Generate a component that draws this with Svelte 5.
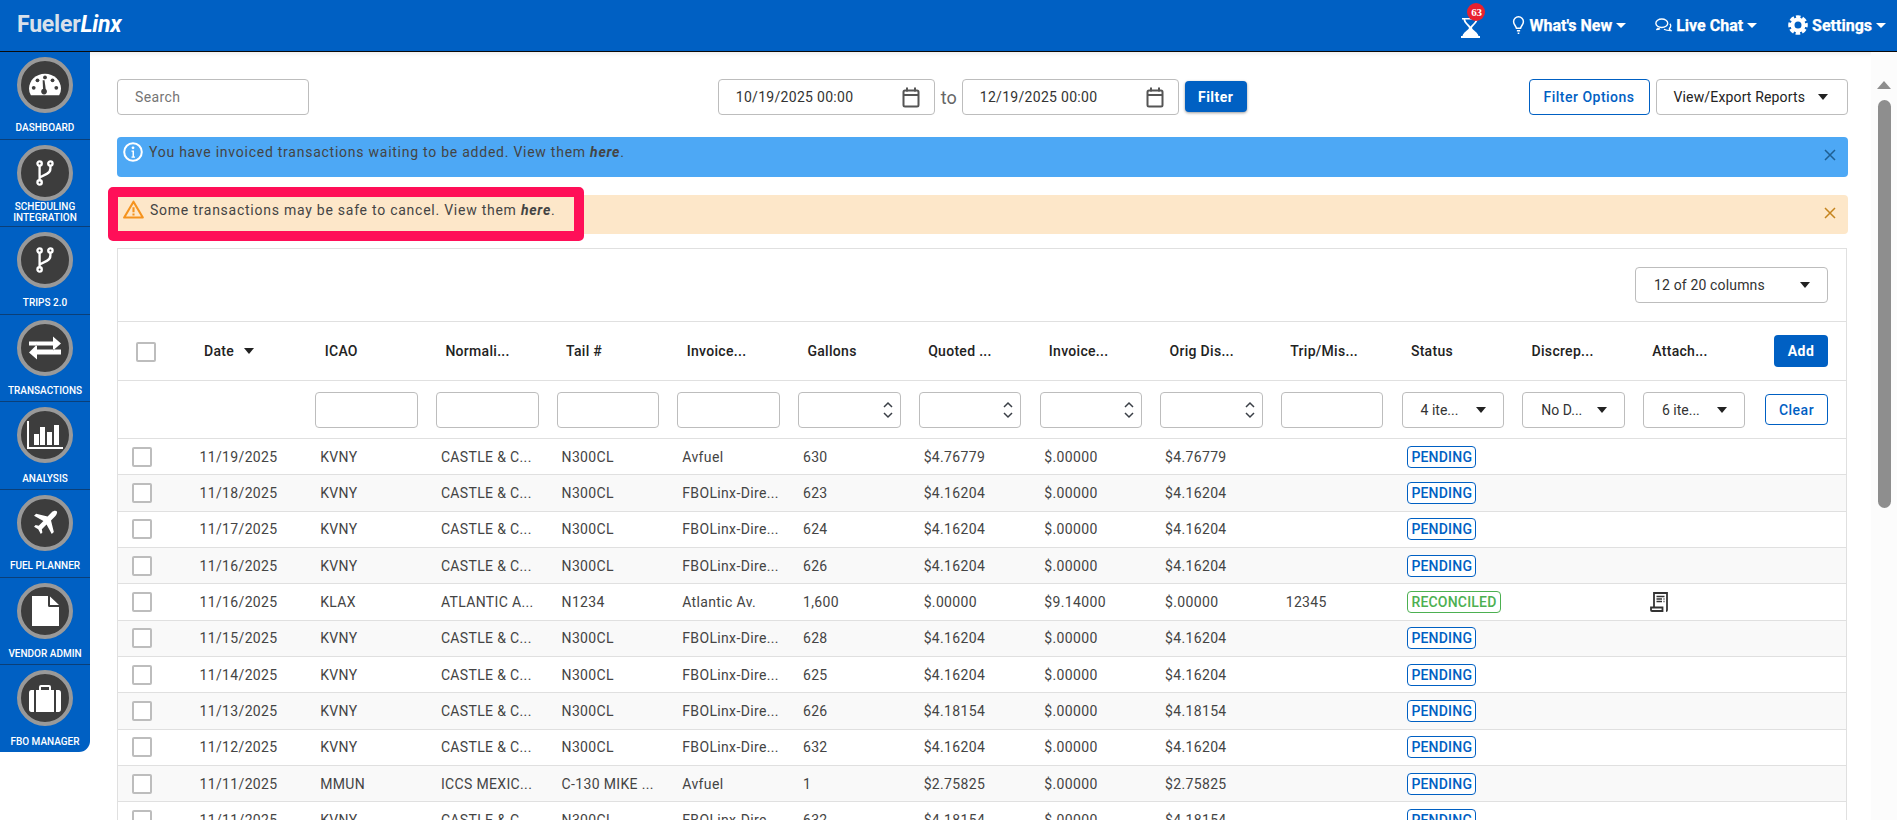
<script>
  const nav = [
    { label: ['DASHBOARD'], icon: 'gauge' },
    { label: ['SCHEDULING', 'INTEGRATION'], icon: 'branch' },
    { label: ['TRIPS 2.0'], icon: 'branch' },
    { label: ['TRANSACTIONS'], icon: 'arrows' },
    { label: ['ANALYSIS'], icon: 'chart' },
    { label: ['FUEL PLANNER'], icon: 'plane' },
    { label: ['VENDOR ADMIN'], icon: 'file' },
    { label: ['FBO MANAGER'], icon: 'case' }
  ];
  const heads = ['Date', 'ICAO', 'Normali...', 'Tail #', 'Invoice...', 'Gallons', 'Quoted ...', 'Invoice...', 'Orig Dis...', 'Trip/Mis...', 'Status', 'Discrep...', 'Attach...'];
  const filters = ['none', 'text', 'text', 'text', 'text', 'num', 'num', 'num', 'num', 'text', 'sel', 'sel', 'sel'];
  const filterText = { 10: '4 ite...', 11: 'No D...', 12: '6 ite...' };
  const C = 'CASTLE & C...', F = 'FBOLinx-Dire...';
  const rows = [
    ['11/19/2025', 'KVNY', C, 'N300CL', 'Avfuel', '630', '$4.76779', '$.00000', '$4.76779', '', 'P', false],
    ['11/18/2025', 'KVNY', C, 'N300CL', F, '623', '$4.16204', '$.00000', '$4.16204', '', 'P', false],
    ['11/17/2025', 'KVNY', C, 'N300CL', F, '624', '$4.16204', '$.00000', '$4.16204', '', 'P', false],
    ['11/16/2025', 'KVNY', C, 'N300CL', F, '626', '$4.16204', '$.00000', '$4.16204', '', 'P', false],
    ['11/16/2025', 'KLAX', 'ATLANTIC A...', 'N1234', 'Atlantic Av.', '1,600', '$.00000', '$9.14000', '$.00000', '12345', 'R', true],
    ['11/15/2025', 'KVNY', C, 'N300CL', F, '628', '$4.16204', '$.00000', '$4.16204', '', 'P', false],
    ['11/14/2025', 'KVNY', C, 'N300CL', F, '625', '$4.16204', '$.00000', '$4.16204', '', 'P', false],
    ['11/13/2025', 'KVNY', C, 'N300CL', F, '626', '$4.18154', '$.00000', '$4.18154', '', 'P', false],
    ['11/12/2025', 'KVNY', C, 'N300CL', F, '632', '$4.16204', '$.00000', '$4.16204', '', 'P', false],
    ['11/11/2025', 'MMUN', 'ICCS MEXIC...', 'C-130 MIKE ...', 'Avfuel', '1', '$2.75825', '$.00000', '$2.75825', '', 'P', false],
    ['11/11/2025', 'KVNY', C, 'N300CL', F, '632', '$4.18154', '$.00000', '$4.18154', '', 'P', false]
  ];
</script>

{#snippet caret()}
  <svg class="caret" viewBox="0 0 10 6" width="10" height="6"><path d="M0 0h10L5 6z" fill="#222" /></svg>
{/snippet}

{#snippet calendar()}
  <svg class="cal" viewBox="0 0 18 21" width="18" height="21" fill="none" stroke="#555" stroke-width="2">
    <rect x="1.500" y="3.500" width="15" height="16" rx="1.500" /><path d="M1.500 8h15M5 .5v4M13 .5v4" />
  </svg>
{/snippet}

{#snippet icon(name)}
  {#if name === 'gauge'}
    <svg viewBox="0 0 34 24" width="32" height="24"><path fill="#fff" fill-rule="evenodd" d="M2 23Q0 20 0 16C0 7 7.500 0 17 0s17 7 17 16q0 4-2 7z" /><g fill="#3d3d3d"><circle cx="5" cy="15" r="2" /><circle cx="9" cy="7" r="2" /><circle cx="17" cy="4" r="2" /><circle cx="25" cy="7" r="2" /><circle cx="29" cy="15" r="2" /><circle cx="16" cy="19" r="3" /><path d="M15 18l-.5-11h2l1.500 11z" /></g></svg>
  {:else if name === 'branch'}
    <svg viewBox="0 0 20 28" width="18" height="26" fill="none" stroke="#fff" stroke-width="2.600"><circle cx="4" cy="3.500" r="2.400" /><circle cx="16" cy="3.500" r="2.400" /><circle cx="4" cy="24.500" r="2.400" /><path d="M4 6v16M16 6v3q0 4-4 6l-8 4" /></svg>
  {:else if name === 'arrows'}
    <svg viewBox="0 0 32 24" width="32" height="24" fill="#fff"><path d="M0 6h24V1l8 7-8 7v-5H0zM32 14H8V9L0 17l8 7v-5h24z" transform="translate(0 -.5)" /></svg>
  {:else if name === 'chart'}
    <svg viewBox="0 0 36 28" width="36" height="28" fill="#fff"><path d="M0 0h2v26h34v2H0z" /><path d="M7 13h5v11H7zM13 6h5v18h-5zM20 11h5v13h-5zM27 4h5v20h-5z" /></svg>
  {:else if name === 'plane'}
    <svg viewBox="0 0 24 24" width="25" height="25" fill="#fff"><path d="M23 1.500c-1-1.200-3.500-.8-5 .7l-4 4L3 3.500 1 5.500l9 5-4.500 4.500-3-.5L1 16l4 2.500L7.500 23l1.500-1.500-.5-3 4.500-4.500 5 9 2-2-2.700-11 4-4c1.500-1.500 2.200-3.800 1.700-4.500z" /></svg>
  {:else if name === 'file'}
    <svg viewBox="0 0 27 30" width="27" height="30" fill="#fff"><path d="M0 0h16v9.500q0 1.500 1.500 1.500H27v19H0zM18 .500L27 9h-9z" /></svg>
  {:else}
    <svg viewBox="0 0 32 27" width="32" height="27" fill="#fff"><path d="M5 5H2.500Q0 5 0 8v16q0 3 2.500 3H5zM27 5h2.500Q32 5 32 8v16q0 3-2.500 3H27zM7 5h3V2q0-2 2-2h8q2 0 2 2v3h3v22H7zM12 2v3h8V2z" fill-rule="evenodd" /></svg>
  {/if}
{/snippet}

<div class="page">
  <header class="top">
    <div class="logo">Fueler<em>Linx</em></div>
    <div class="top-right">
      <div class="hour">
        <svg viewBox="0 0 19 20" width="19" height="20" fill="#fff"><path d="M1 0h17v1.500h-1.500C16 5.500 12 7.500 11 10c1 2.500 5.500 4 6.500 8H19v2H0v-2h1.500c1-4 5.500-5.500 6.500-8C7 7.500 3 5.500 2.500 1.500H1zM4.200 1.500C5 5 8 6.500 9.500 8.500 11 6.500 14 5 14.800 1.500z" fill-rule="evenodd" /></svg>
        <span class="badge">63</span>
      </div>
      <div class="tnav news">
        <svg viewBox="0 0 14 22" width="13" height="18" fill="none" stroke="#fff" stroke-width="1.800"><path d="M4.500 15C4 12 1 10.500 1 7a6 6 0 0 1 12 0c0 3.500-3 5-3.500 8z" /><path d="M5 18h4M6 21h2" /></svg>
        <span>What's New</span><i></i>
      </div>
      <div class="tnav chat">
        <svg viewBox="0 0 20 16" width="17" height="14" fill="none" stroke="#fff" stroke-width="1.600"><ellipse cx="8" cy="6" rx="7" ry="5" /><path d="M4 11.500q-1 1.500-2.500 2 2.500 0 4.500-1.200M10.500 13q3 1.500 8 1.500-1.500-1-1.500-2.500 1.500-1.300 1.500-3 0-1.500-1-2.500" /></svg>
        <span>Live Chat</span><i></i>
      </div>
      <div class="tnav gear">
        <svg viewBox="0 0 20 20" width="20" height="20"><circle cx="10" cy="10" r="5.500" fill="none" stroke="#fff" stroke-width="4" /><circle cx="10" cy="10" r="8.300" fill="none" stroke="#fff" stroke-width="3" stroke-dasharray="4.500 2.020" stroke-dashoffset="2.250" /></svg>
        <span>Settings</span><i></i>
      </div>
    </div>
  </header>

  <div class="body">
    <aside class="side">
      {#each nav as n}
        <div class="nav-item">
          <div class="disc">{@render icon(n.icon)}</div>
          <div class="nav-label" class:two={n.label.length > 1}>{#each n.label as l}<div>{l}</div>{/each}</div>
        </div>
      {/each}
    </aside>

    <main class="main">
      <div class="controls">
        <input class="search" placeholder="Search" />
        <div class="dates">
          <div class="date"><span>10/19/2025 00:00</span>{@render calendar()}</div>
          <span class="to">to</span>
          <div class="date"><span>12/19/2025 00:00</span>{@render calendar()}</div>
          <button class="btn-filter">Filter</button>
        </div>
        <div class="right-btns">
          <button class="btn-outline">Filter Options</button>
          <div class="select-report"><span>View/Export Reports</span>{@render caret()}</div>
        </div>
      </div>

      <div class="alert info">
        <svg viewBox="0 0 20 20" width="20" height="20"><circle cx="10" cy="10" r="8.800" fill="none" stroke="#fff" stroke-width="2" /><circle cx="10" cy="5.800" r="1.400" fill="#fff" /><path d="M8.500 8.500h2.500v6h1v1.200H8.500v-1.200h1V9.700h-1z" fill="#fff" /></svg>
        <span>You have invoiced transactions waiting to be added. View them <b>here</b>.</span>
        <svg class="x" viewBox="0 0 12 12" width="12" height="12"><path d="M1 1l10 10M11 1L1 11" stroke="#1f5f92" stroke-width="1.500" /></svg>
      </div>
      <div class="alert warn">
        <svg viewBox="0 0 22 20" width="21" height="19" fill="none"><path d="M11 1.800L1.200 18.500h19.600z" stroke="#f5931e" stroke-width="2.200" stroke-linejoin="round" /><path d="M11 7.500v5.500M11 14.300v2" stroke="#f5931e" stroke-width="2.200" /></svg>
        <span>Some transactions may be safe to cancel. View them <b>here</b>.</span>
        <svg class="x" viewBox="0 0 12 12" width="12" height="12"><path d="M1 1l10 10M11 1L1 11" stroke="#c5841f" stroke-width="1.500" /></svg>
        <div class="mark"></div>
      </div>

      <section class="card">
        <div class="toolbar">
          <div class="select-cols"><span>12 of 20 columns</span>{@render caret()}</div>
        </div>
        <div class="grid-row head">
          <div class="chk-cell"><span class="chk"></span></div>
          {#each heads as h, i}
            <div class="hcell">{h}{#if i === 0}{@render caret()}{/if}</div>
          {/each}
          <div class="end"><button class="btn-add">Add</button></div>
        </div>
        <div class="grid-row filter">
          <div></div>
          {#each filters as f, i}
            <div class="fcell">
              {#if f === 'text'}
                <span class="finput"></span>
              {:else if f === 'num'}
                <span class="finput num">
                  <svg viewBox="0 0 10 20" width="10" height="20" fill="none" stroke="#3a3f46" stroke-width="1.500"><path d="M1 7l4-4 4 4M1 13l4 4 4-4" /></svg>
                </span>
              {:else if f === 'sel'}
                <span class="finput sel"><span>{filterText[i]}</span>{@render caret()}</span>
              {/if}
            </div>
          {/each}
          <div class="end"><button class="btn-clear">Clear</button></div>
        </div>
        {#each rows as r, ri}
          <div class="grid-row row" class:odd={ri % 2 === 1}>
            <div class="chk-cell body-chk"><span class="chk"></span></div>
            {#each r.slice(0, 10) as c}
              <div class="cell">{c}</div>
            {/each}
            <div class="cell">
              {#if r[10] === 'P'}<span class="tag pending">PENDING</span>{:else}<span class="tag rec">RECONCILED</span>{/if}
            </div>
            <div class="cell"></div>
            <div class="cell">
              {#if r[11]}
                <svg class="doc" viewBox="0 0 18 20" width="18" height="20" fill="none" stroke="#333" stroke-width="1.800"><path d="M4 15.500V1h13v17q0 1-1 1" /><path d="M1 15.500h11.500V19H2q-1 0-1-1z" /><path d="M6.500 4.500h8M6.500 7h5.500M13.500 7h1M6.500 9.500h5.500M13.500 9.500h1" stroke-width="1.300" /></svg>
              {/if}
            </div>
            <div></div>
          </div>
        {/each}
      </section>
    </main>

    <div class="scroll">
      <svg viewBox="0 0 14 8" width="14" height="8"><path d="M7 0l7 8H0z" fill="#8e8e8e" /></svg>
      <div class="thumb"></div>
    </div>
  </div>
</div>

<style>
  :global(body) { margin: 0; background: #fff; overflow: hidden; }
  :global(*) { box-sizing: border-box; }
  .page { height: 820px; display: flex; flex-direction: column; font-family: Roboto, "Liberation Sans", sans-serif; color: #333; overflow: hidden; }

  .top { height: 52px; flex: none; background: #0060c3; border-bottom: 1px solid #0a0a0a; display: flex; align-items: center; justify-content: space-between; padding: 0 11px 1px 17px; color: #fff; }
  .logo { font-size: 23px; font-weight: 700; color: #d9e0ea; letter-spacing: -.2px; margin-top: -2px; }
  .logo em { color: #fff; font-style: italic; }
  .top-right { display: flex; align-items: center; }
  .hour { position: relative; width: 19px; height: 20px; margin-right: 32px; margin-top: 5px; }
  .hour svg { display: block; }
  .badge { position: absolute; left: 6px; top: -15px; width: 18px; height: 18px; border-radius: 50%; background: #e8212f; color: #fff; font: 700 11px/18px "Liberation Serif", serif; text-align: center; letter-spacing: -.2px; }
  .tnav { display: flex; align-items: center; font-size: 16px; font-weight: 700; gap: 4px; -webkit-text-stroke: .25px #fff; }
  .tnav i { width: 0; height: 0; border: 5px solid transparent; border-top: 5px solid #fff; border-bottom: 0; margin-left: 0; }
  .news { margin-right: 29px; }
  .chat { margin-right: 31px; }
  .gear { gap: 4px; }
  .gear i { margin-left: 0; }

  .body { flex: 1; min-height: 0; display: flex; box-shadow: inset 0 6px 6px -6px rgba(0,0,0,.12); }
  .side { width: 90px; flex: none; align-self: flex-start; background: #0060c3; border-bottom-right-radius: 11px; overflow: hidden; }
  .nav-item { height: 87.600px; border-bottom: 1px solid #0b3f78; display: flex; flex-direction: column; align-items: center; padding-top: 5px; }
  .nav-item:last-child { border-bottom: 0; height: 87px; }
  .disc { width: 56px; height: 56px; flex: none; border-radius: 50%; background: #3d3d3d; border: 4px solid #999; display: flex; align-items: center; justify-content: center; }
  .nav-label { flex: 1; display: flex; flex-direction: column; justify-content: center; color: #fff; font-size: 10px; font-weight: 500; line-height: 11px; text-align: center; padding-top: 4px; white-space: nowrap; }
  .two { padding-top: 0; margin-top: -3px; }

  .main { flex: 1; min-width: 0; padding: 27px 0 0 27px; width: 0; }
  .controls { display: grid; grid-template-columns: 1fr auto 1fr; align-items: center; height: 36px; margin-bottom: 22px; width: 1730.500px; }
  .search { width: 192px; height: 36px; border: 1px solid #bdbdbd; border-radius: 4px; padding: 0 17px; font: 14px Roboto, sans-serif; letter-spacing: .4px; outline: 0; }
  .search::placeholder { color: #757575; opacity: 1; }
  .dates { display: flex; align-items: center; margin-left: 0; }
  .date { width: 217px; height: 36px; border: 1px solid #bdbdbd; border-radius: 4px; display: flex; align-items: center; justify-content: space-between; padding: 0 14px 0 17px; font-size: 14px; color: #333; letter-spacing: .3px; }
  .to { font-size: 18px; color: #666; margin: 0 5px 0 6px; }
  .btn-filter { margin: -1px 0 0 6px; width: 62px; height: 31px; border: 0; border-radius: 4px; background: #0060c3; color: #fff; font: 700 14px Roboto, sans-serif; letter-spacing: .5px; box-shadow: 0 1px 3px rgba(0,0,0,.4); }
  .right-btns { display: flex; justify-content: flex-end; gap: 6px; }
  .btn-outline { width: 121px; height: 36px; background: #fff; border: 1px solid #0060c3; border-radius: 4px; color: #0060c3; font: 500 14px Roboto, sans-serif; letter-spacing: .5px; }
  .select-report { width: 192px; height: 36px; border: 1px solid #bdbdbd; border-radius: 4px; display: flex; align-items: center; justify-content: space-between; padding: 0 19px 0 17px; font-size: 14px; letter-spacing: .15px; color: #222; }

  .alert { position: relative; width: 1730.500px; border-radius: 4px; display: flex; padding: 5px 5px 0 6px; gap: 6px; font-size: 14px; letter-spacing: .75px; color: #444; }
  .alert span { flex: 1; padding-top: 2px; }
  .alert b { font-style: italic; font-weight: 700; }
  .alert .x { margin: 7px 7px 0 0; }
  .info { height: 40px; background: #4da8f5; margin-bottom: 18px; }
  .warn { height: 39px; background: #fde7c9; margin-bottom: 14px; }
  .mark { position: absolute; left: -9px; top: -8px; width: 476px; height: 54px; border: 10px solid #ff0f58; border-radius: 5px; }

  .card { width: 1730px; border: 1px solid #e0e0e0; border-bottom: 0; }
  .toolbar { height: 73px; display: flex; justify-content: flex-end; align-items: center; padding: 0 18px 1px 0; border-bottom: 1px solid #e0e0e0; }
  .select-cols { width: 193px; height: 36px; border: 1px solid #bdbdbd; border-radius: 4px; display: flex; align-items: center; justify-content: space-between; padding: 0 17px 0 18px; font-size: 14px; letter-spacing: .15px; color: #333; }

  .grid-row { display: grid; grid-template-columns: 81.500px repeat(13, 120.700px) 1fr; align-items: center; border-bottom: 1px solid #e0e0e0; }
  .head { height: 59px; font-size: 14px; font-weight: 500; color: #222; }
  .filter { height: 58.200px; }
  .row { height: 36.300px; font-size: 14px; color: #444; letter-spacing: .35px; }
  .odd { background: #f9f9f9; }
  .chk-cell { padding-left: 18px; display: flex; margin-top: 2px; }
  .body-chk { padding-left: 14px; margin-top: 0; }
  .chk { width: 20px; height: 20px; border: 2px solid #bdbdbd; border-radius: 2px; background: #fff; display: block; }
  .hcell { padding-left: 4.500px; display: flex; align-items: center; gap: 10px; white-space: nowrap; letter-spacing: .3px; }
  .fcell { padding-left: 0; margin-left: -4.800px; }
  .finput { display: block; width: 102.500px; height: 36px; border: 1px solid #bdbdbd; border-radius: 4px; background: #fff; font-size: 14px; color: #333; }
  .num { display: flex; justify-content: flex-end; align-items: center; padding-right: 7px; }
  .sel { display: flex; align-items: center; justify-content: space-between; padding: 0 17px 0 18px; }
  .cell { white-space: nowrap; overflow: visible; display: flex; align-items: center; }
  .doc { margin-left: 2px; }
  .tag { display: inline-block; height: 22px; line-height: 20px; margin-left: 1px; border-radius: 4px; border: 1px solid; padding: 0 3px; font-size: 14px; font-weight: 500; letter-spacing: .2px; background: #fff; }
  .pending { color: #0060c3; border-color: #0060c3; }
  .rec { color: #4cb051; border-color: #4cb051; }
  .end { display: flex; justify-content: flex-end; padding-right: 18px; margin-left: -40px; }
  .btn-add { width: 54px; height: 32px; border: 0; border-radius: 4px; background: #0060c3; color: #fff; font: 700 14px Roboto, sans-serif; letter-spacing: .4px; }
  .btn-clear { width: 63px; height: 31px; border: 1px solid #0060c3; border-radius: 4px; background: #fff; color: #0060c3; font: 500 14px Roboto, sans-serif; letter-spacing: .5px; }

  .scroll { width: 26px; flex: none; display: flex; flex-direction: column; align-items: center; padding: 29px 0 0 0; background: #fcfcfc; }
  .scroll svg { display: block; }
  .thumb { width: 13px; height: 408px; background: #8e8e8e; border-radius: 7px; margin-top: 11px; }
</style>
